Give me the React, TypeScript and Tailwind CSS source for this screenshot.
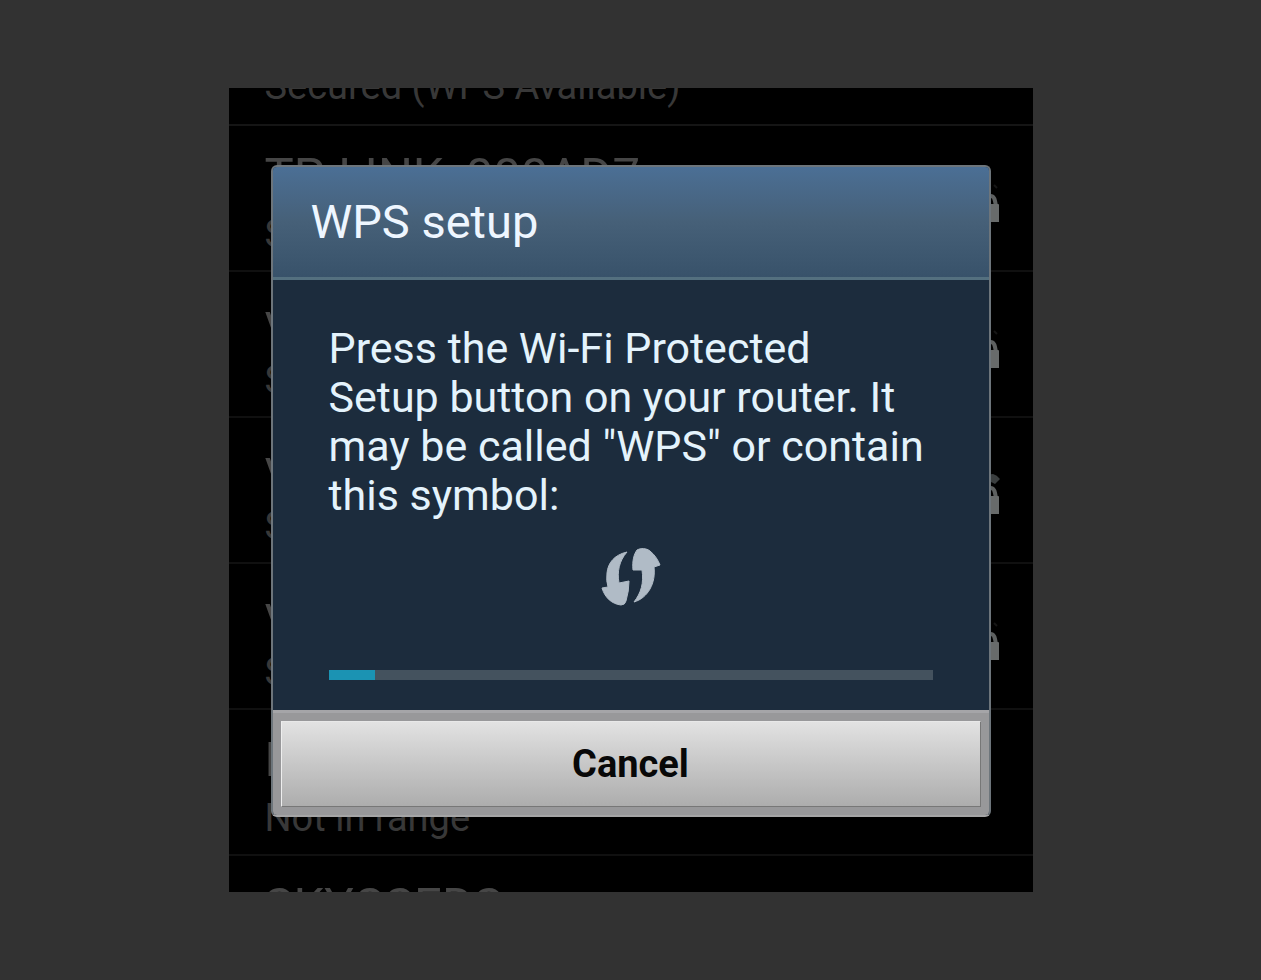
type Network = { name: string; status: string; signal: "weak" | "strong" | "none" };

const networks: Network[] = [
  { name: "TP-LINK_000AD7", status: "Secured (WPS Available)", signal: "weak" },
  { name: "virginmedia", status: "Secured (WPS Available)", signal: "weak" },
  { name: "virginmedia", status: "Secured (WPS Available)", signal: "strong" },
  { name: "virginmedia", status: "Secured (WPS Available)", signal: "weak" },
  { name: "Home", status: "Not in range", signal: "none" },
  { name: "SKYCSEDS", status: "Secured", signal: "none" },
];

function LockIcon({ strong }: { strong: boolean }) {
  return (
    <svg viewBox="0 0 24 44" className="h-11 w-6 shrink-0" aria-hidden="true">
      {strong && <path d="M8 1 L16 0 Q20 1 23 5 L18 10 Q14 7 8 8Z" fill="#3a3e3f" />}
      {!strong && <path d="M17 3 L20 6" stroke="#161616" strokeWidth="2" />}
      <path d="M10 24 V19 Q10 14 14 14 Q17 14 18 19 L19 24" fill="none" stroke="#5e6161" strokeWidth="4" />
      <path d="M7 22 H21 Q22 22 22 23 V40 H7Z" fill="#686b6b" />
    </svg>
  );
}

function NetworkRow({ name, status, signal }: Network) {
  return (
    <li className="flex h-[146px] items-start justify-between border-b-2 border-[#101010] pt-[22px] pr-8 pl-9">
      <div>
        <p className="text-[49px] leading-14 text-[#464646]">{name}</p>
        <p className="mt-2 text-[38px] leading-11 text-[#383838]">{status}</p>
      </div>
      {signal !== "none" && (
        <div className="pt-[34px]">
          <LockIcon strong={signal === "strong"} />
        </div>
      )}
    </li>
  );
}

function WpsIcon() {
  return (
    <svg viewBox="0 0 60 58" className="h-[58px] w-[60px]" role="img" aria-label="Wi-Fi Protected Setup symbol">
      <g fill="#b0bbc6" stroke="#b0bbc6" strokeWidth="1" strokeLinejoin="round">
        <path d="M26 4 C13 7 7 15 6 25 Q5 33 7 39 L1 40 C4 50 11 56 20 57 Q24 57 25 53 Q28 43 28 33 L18 35 C16 24 18 13 26 4Z" />
        <path d="M32 22 C31 13 33 6 36 2 C40 0 45 0 49 3 C54 7 57 12 59 17 L53 19 C55 35 47 50 33 54 C40 45 43 35 41 22Z" />
      </g>
    </svg>
  );
}

export default function App() {
  return (
    <div className="flex min-h-screen items-center justify-center bg-[#323232] font-[Roboto,sans-serif]">
      <main className="relative flex aspect-square w-full max-w-[804px] items-center justify-center overflow-hidden bg-black">
        <div className="absolute inset-0 overflow-hidden whitespace-nowrap" aria-hidden="true">
          <div className="flex h-[38px] items-end border-b-2 border-[#151515] pb-4 pl-9">
            <p className="text-[38px] leading-11 text-[#383838]">Secured (WPS Available)</p>
          </div>
          <ul>
            {networks.map((network, index) => (
              <NetworkRow key={index} {...network} />
            ))}
          </ul>
        </div>

        <section
          role="dialog"
          aria-labelledby="wps-title"
          className="relative mx-10 mt-0.5 w-full max-w-[720px] overflow-hidden rounded-md border-2 border-[#6d757b] border-b-[#a5a5a6] bg-[#1c2c3d]"
        >
          <header className="border-b-3 border-[#54707f] bg-linear-to-b from-[#4b6f95] via-[#466078] to-[#38526a] px-[38px] py-6">
            <h1 id="wps-title" className="text-[47px] leading-[62px] text-[#eef6ff]">
              WPS setup
            </h1>
          </header>

          <div className="px-14 pt-11 pb-[30px]">
            <p className="text-[43px] leading-[49px] text-[#e4f3fc]">
              Press the Wi-Fi Protected
              <br />
              Setup button on your router. It
              <br />
              may be called "WPS" or contain
              <br />
              this symbol:
            </p>
            <div className="flex justify-center pt-7">
              <WpsIcon />
            </div>
            <div
              role="progressbar"
              aria-label="WPS setup progress"
              aria-valuenow={8}
              className="mt-16 h-2.5 bg-[#44525e]"
            >
              <div className="h-full w-[46px] bg-[#1b93b3]" />
            </div>
          </div>

          <footer className="border-t-3 border-[#a5a5a8] bg-[#98989a] p-2">
            <button
              type="button"
              className="w-full border border-t-[#e8e8e8] border-r-[#777] border-b-[#777] border-l-[#eee] bg-linear-to-b from-[#e2e2e2] to-[#adadad] py-5 text-[38px] leading-11 font-bold text-[#080808]"
            >
              Cancel
            </button>
          </footer>
        </section>
      </main>
    </div>
  );
}
